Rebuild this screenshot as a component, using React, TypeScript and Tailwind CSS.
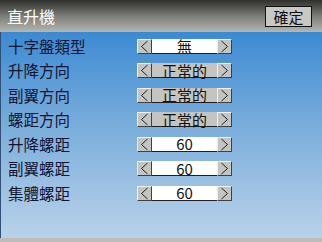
import React from 'react';

type Row = { label: string; value: string; gray?: boolean };

const rows: Row[] = [
  { label: '十字盤類型', value: '無' },
  { label: '升降方向', value: '正常的', gray: true },
  { label: '副翼方向', value: '正常的', gray: true },
  { label: '螺距方向', value: '正常的', gray: true },
  { label: '升降螺距', value: '60' },
  { label: '副翼螺距', value: '60' },
  { label: '集體螺距', value: '60' },
];

const font = { fontFamily: '"Noto Sans CJK TC", "Noto Sans", sans-serif' };

const Arrow = ({ dir }: { dir: 'l' | 'r' }) => (
  <div className="w-[15px] h-[15px] bg-[#c4c4c0] border border-[#404040] border-t-[#f0f0f0] border-l-[#f0f0f0] flex items-center justify-center">
    <svg width="9" height="13" viewBox="0 0 9 13">
      <path
        d={dir === 'l' ? 'M7.5 1 L1.5 6.5 L7.5 12' : 'M1.5 1 L7.5 6.5 L1.5 12'}
        fill="none"
        stroke="#202020"
        strokeWidth="1"
      />
    </svg>
  </div>
);

export default function App() {
  return (
    <div className="w-[322px] h-[242px] flex flex-col overflow-hidden" style={font}>
      <div className="h-[32px] shrink-0 flex items-center justify-between pl-[7px] pr-[10px] bg-gradient-to-b from-[#30312c] via-[#7c7d78] to-[#b6b7b1]">
        <span className="text-white text-[16px] leading-none">直升機</span>
        <div className="w-[47px] h-[21px] bg-[#c8c8c4] border border-[#101010] flex items-center justify-center text-[15px] leading-none text-[#101010]">
          確定
        </div>
      </div>
      <div className="flex-1 flex flex-col pt-[2px] border-l border-[#30507a] bg-gradient-to-b from-[#3a8ad2] via-[#7fb0dc] to-[#b9d2e9]">
        {rows.map((r) => (
          <div key={r.label} className="h-[24.5px] flex items-center">
            <span className="w-[136px] pl-[7px] text-[15.5px] leading-none text-[#101434]">{r.label}</span>
            <Arrow dir="l" />
            <div
              className={`w-[65px] h-[15px] border-b border-[#202020] flex items-center justify-center text-[15px] leading-none text-[#101010] ${
                r.gray ? 'bg-[#c4c4c0]' : 'bg-white'
              }`}
            >
              {r.value}
            </div>
            <Arrow dir="r" />
          </div>
        ))}
      </div>
      <div className="h-[4px] shrink-0 bg-[#bcbcb8]" />
    </div>
  );
}
